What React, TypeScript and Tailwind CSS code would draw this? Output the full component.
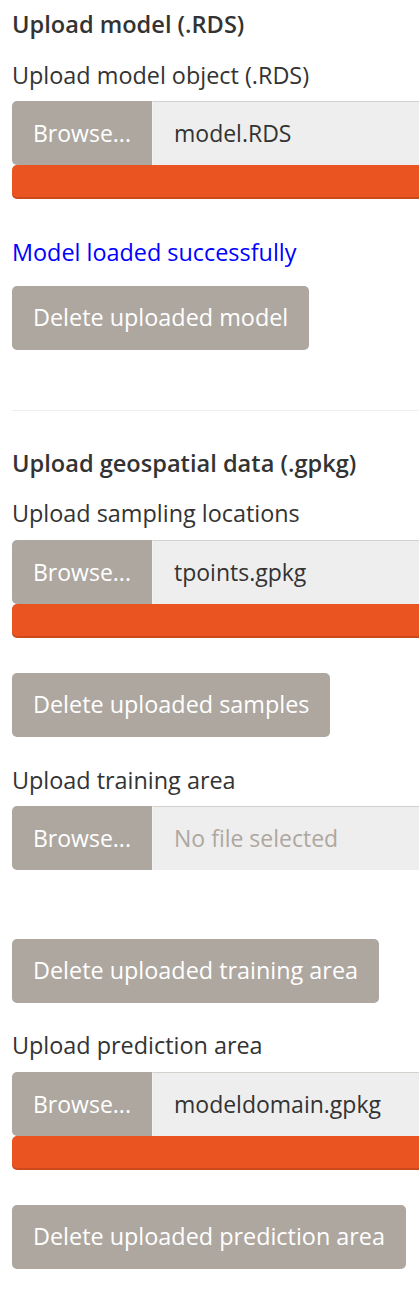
import React from "react";

const font = { fontFamily: '"Open Sans", "Noto Sans", sans-serif' };

function FileInput({ name, className = "" }: { name?: string; className?: string }) {
  return (
    <div className={`flex h-[64px] w-[440px] ${className}`}>
      <div className="flex h-full w-[140px] shrink-0 items-center rounded-l-[5px] bg-[#aea79f] pl-[21px] text-[23px] text-white">
        Browse...
      </div>
      <div className="flex h-full flex-1 items-center border-t border-l border-t-[#d4d0cc] border-l-[#f4f3f2] bg-[#eeeeee] pl-[21px] text-[23px]">
        {name ? (
          <span className="text-[#333333]">{name}</span>
        ) : (
          <span className="text-[#aea79f]">No file selected</span>
        )}
      </div>
    </div>
  );
}

function Progress() {
  return <div className="h-[34px] w-[440px] rounded-l-[5px] bg-[#e95420] shadow-[inset_0_-2px_0_rgba(0,0,0,0.12)]" />;
}

function Btn({ children, className = "" }: { children: React.ReactNode; className?: string }) {
  return (
    <div className={`flex h-[64px] w-fit items-center whitespace-nowrap rounded-[5px] bg-[#aea79f] px-[21px] text-[23.4px] text-white ${className}`}>
      {children}
    </div>
  );
}

export default function App() {
  return (
    <div className="min-h-[1297px] w-[419px] overflow-hidden bg-white px-[12px] pt-[12px] text-[#333333]" style={font}>
      <div className="h-[24px] whitespace-nowrap text-[23.6px] font-semibold leading-[24px]">Upload model (.RDS)</div>
      <div className="mt-[27px] h-[24px] whitespace-nowrap text-[23.4px] leading-[24px]">Upload model object (.RDS)</div>
      <FileInput name="model.RDS" className="mt-[14px]" />
      <Progress />
      <div className="mt-[41px] h-[24px] whitespace-nowrap text-[23.4px] leading-[24px] text-[#0000ff]">Model loaded successfully</div>
      <Btn className="mt-[22px]">Delete uploaded model</Btn>
      <div className="mt-[60px] mr-[-12px] h-px bg-[#eeeeee]" />
      <div className="mt-[40px] h-[24px] whitespace-nowrap text-[23.6px] font-semibold leading-[24px]">Upload geospatial data (.gpkg)</div>
      <div className="mt-[26px] h-[24px] whitespace-nowrap text-[23.4px] leading-[24px]">Upload sampling locations</div>
      <FileInput name="tpoints.gpkg" className="mt-[15px]" />
      <Progress />
      <Btn className="mt-[35px]">Delete uploaded samples</Btn>
      <div className="mt-[31px] h-[24px] whitespace-nowrap text-[23.4px] leading-[24px]">Upload training area</div>
      <FileInput className="mt-[14px]" />
      <Btn className="mt-[69px]">Delete uploaded training area</Btn>
      <div className="mt-[30px] h-[24px] whitespace-nowrap text-[23.4px] leading-[24px]">Upload prediction area</div>
      <FileInput name="modeldomain.gpkg" className="mt-[15px]" />
      <Progress />
      <Btn className="mt-[35px]">Delete uploaded prediction area</Btn>
    </div>
  );
}
